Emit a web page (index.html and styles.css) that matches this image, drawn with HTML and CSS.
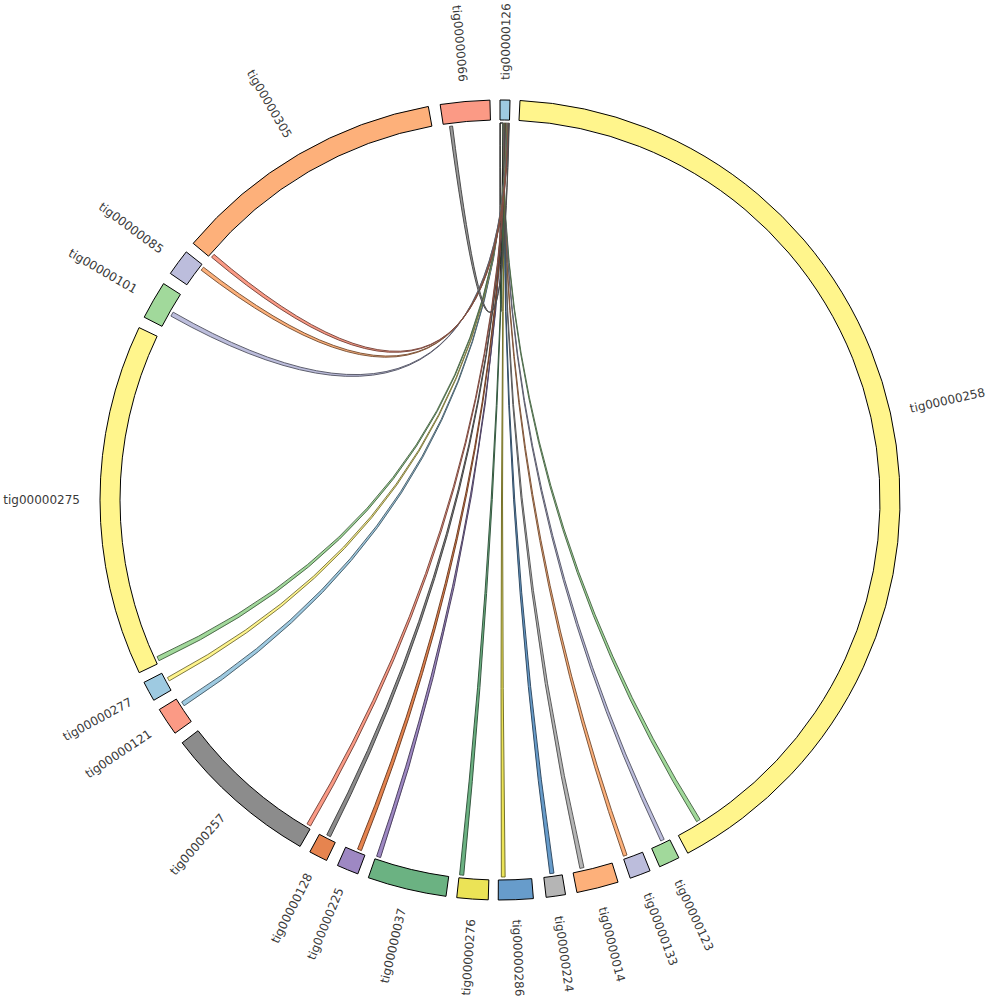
FILE: index.html
```html
<!DOCTYPE html>
<html>
<head>
<meta charset="utf-8">
<title>Chord diagram</title>
<link rel="stylesheet" href="styles.css">
</head>
<body>
<svg id="chart" class="chart" width="1000" height="1000" viewBox="0 0 1000 1000">
  <g id="root" transform="translate(500,500)">
    <g id="ribbons" class="ribbons"></g>
    <g id="groups" class="groups"></g>
    <g id="labels" class="labels"></g>
  </g>
</svg>
<script src="chart.js"></script>
</body>
</html>
```
FILE: styles.css
```css
html, body {
  margin: 0;
  padding: 0;
  background: #ffffff;
}
.chart {
  display: block;
}
.grp {
  stroke: #000000;
  stroke-width: 1;
}
.ribbon {
  stroke-width: 1;
}
.ribbon-self {
  fill: #fffef4;
  stroke: #222222;
  stroke-width: 1;
}
.label {
  font-family: "DejaVu Sans", Verdana, sans-serif;
  font-size: 12px;
  fill: #3a3a3a;
}
```
FILE: chart.js
```js
(function () {
  var NS = "http://www.w3.org/2000/svg";
  var ri = 380, ro = 400, rc = 377;

  // name, startAngle, endAngle, colour
  var groups = [
    ["tig00000126", 0.000, 0.025, "#9ecae1"],
    ["tig00000258", 0.050, 2.653, "#fff58c"],
    ["tig00000123", 2.678, 2.731, "#a1d99b"],
    ["tig00000133", 2.757, 2.810, "#bcbddc"],
    ["tig00000014", 2.842, 2.948, "#fdb07a"],
    ["tig00000224", 2.977, 3.026, "#b5b5b5"],
    ["tig00000286", 3.058, 3.146, "#679ccb"],
    ["tig00000276", 3.171, 3.250, "#ebe356"],
    ["tig00000037", 3.277, 3.477, "#6bb282"],
    ["tig00000225", 3.505, 3.560, "#9e88c3"],
    ["tig00000128", 3.590, 3.637, "#e6844f"],
    ["tig00000257", 3.665, 4.060, "#8c8c8c"],
    ["tig00000121", 4.090, 4.161, "#fb9a85"],
    ["tig00000277", 4.188, 4.239, "#9ecae1"],
    ["tig00000275", 4.266, 5.158, "#fff58c"],
    ["tig00000101", 5.187, 5.284, "#a1d99b"],
    ["tig00000085", 5.3145, 5.3815, "#bcbddc"],
    ["tig00000305", 5.409, 6.103, "#fdb07a"],
    ["tig00000066", 6.133, 6.258, "#fb9a85"]
  ];

  // target index, target start, target end, colour
  var chords = [
    [1, 2.582, 2.593, "#a1d99b"],
    [2, 2.691, 2.701, "#bcbddc"],
    [3, 2.798, 2.808, "#fdb07a"],
    [4, 2.917, 2.928, "#b5b5b5"],
    [5, 2.998, 3.009, "#679ccb"],
    [6, 3.128, 3.138, "#ebe356"],
    [7, 3.238, 3.249, "#6bb282"],
    [8, 3.464, 3.475, "#9e88c3"],
    [9, 3.518, 3.529, "#e6844f"],
    [10, 3.608, 3.619, "#8c8c8c"],
    [11, 3.668, 3.679, "#fb9a85"],
    [12, 4.135, 4.147, "#9ecae1"],
    [13, 4.212, 4.222, "#fff58c"],
    [14, 4.272, 4.284, "#a1d99b"],
    [15, 5.222, 5.234, "#bcbddc"],
    [16, 5.368, 5.378, "#fdb07a"],
    [17, 5.412, 5.422, "#fb9a85"],
    [18, 6.149, 6.157, "#9a9a9a"]
  ];

  function pt(a, r) {
    return (r * Math.sin(a)).toFixed(2) + "," + (-r * Math.cos(a)).toFixed(2);
  }

  function darker(hex) {
    var n = parseInt(hex.slice(1), 16);
    var f = 0.5;
    var r = Math.round(((n >> 16) & 255) * f);
    var g = Math.round(((n >> 8) & 255) * f);
    var b = Math.round((n & 255) * f);
    return "rgb(" + r + "," + g + "," + b + ")";
  }

  function arcPath(a0, a1) {
    var large = (a1 - a0) > Math.PI ? 1 : 0;
    return "M" + pt(a0, ro) +
      "A" + ro + "," + ro + " 0 " + large + " 1 " + pt(a1, ro) +
      "L" + pt(a1, ri) +
      "A" + ri + "," + ri + " 0 " + large + " 0 " + pt(a0, ri) + "Z";
  }

  function ribbonPath(s0, s1, t0, t1) {
    return "M" + pt(s0, rc) +
      "A" + rc + "," + rc + " 0 0 1 " + pt(s1, rc) +
      "Q0,0 " + pt(t0, rc) +
      "A" + rc + "," + rc + " 0 0 1 " + pt(t1, rc) +
      "Q0,0 " + pt(s0, rc) + "Z";
  }

  function el(name, attrs, parent) {
    var e = document.createElementNS(NS, name);
    for (var k in attrs) e.setAttribute(k, attrs[k]);
    parent.appendChild(e);
    return e;
  }

  var gR = document.getElementById("ribbons");
  var gG = document.getElementById("groups");
  var gL = document.getElementById("labels");

  // self ribbon of tig00000126
  el("path", {
    "class": "ribbon-self",
    d: ribbonPath(0.0003, 0.0075, 0.0003, 0.0075)
  }, gR);

  var s = 0.0078;
  var step = (0.0245 - s) / chords.length;
  chords.forEach(function (c) {
    el("path", {
      "class": "ribbon",
      d: ribbonPath(s, s + step, c[1], c[2]),
      fill: c[3],
      stroke: darker(c[3])
    }, gR);
    s += step;
  });

  groups.forEach(function (g) {
    el("path", { "class": "grp", d: arcPath(g[1], g[2]), fill: g[3] }, gG);
    var a = (g[1] + g[2]) / 2;
    var flip = a > Math.PI;
    var t = el("text", {
      "class": "label",
      dy: ".35em",
      "text-anchor": flip ? "end" : "start",
      transform: "rotate(" + (a * 180 / Math.PI - 90).toFixed(3) + ") translate(" + (ro + 20) + ")" + (flip ? " rotate(180)" : "")
    }, gL);
    t.textContent = g[0];
  });
})();
```
